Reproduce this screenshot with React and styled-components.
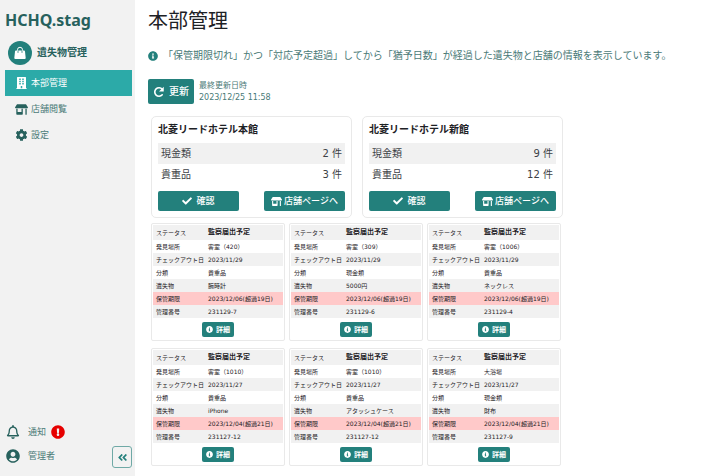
import React from 'react';
import styled, { createGlobalStyle, css, ThemeProvider } from 'styled-components';
import {
  FaAngleDoubleLeft,
  FaBuilding,
  FaCheck,
  FaCog,
  FaExclamationCircle,
  FaInfoCircle,
  FaRegBell,
  FaStoreAlt,
  FaUserCircle,
} from 'react-icons/fa';

const theme = {
  colors: {
    primary: '#23807c',
    primaryDark: '#27615d',
    active: '#2caaa8',
    sidebar: '#f2f2f2',
    stripe: '#f1f1f1',
    border: '#e9e9e9',
    danger: '#ffc9c9',
    alert: '#e60000',
    text: '#1d2125',
    textLight: '#3c4145',
    link: '#4a7a77',
  },
};

const GlobalStyle = createGlobalStyle`
  *, *::before, *::after {
    box-sizing: border-box;
  }

  body {
    margin: 0;
    background: #fff;
    color: ${theme.colors.text};
    font-family: "DejaVu Sans", "Noto Sans CJK JP", sans-serif;
    font-size: 10px;
    line-height: 14px;
  }

  h1, h2, p {
    margin: 0;
  }

  a {
    color: inherit;
    text-decoration: none;
  }

  button {
    font-family: inherit;
    cursor: pointer;
  }

  svg {
    display: block;
    flex-shrink: 0;
  }
`;

const Layout = styled.div`
  display: flex;
  min-height: 100vh;
`;

const Sidebar = styled.aside`
  flex: 0 0 135px;
  display: flex;
  flex-direction: column;
  padding: 8px 3px 8px 5px;
  background: ${({ theme }) => theme.colors.sidebar};
  color: ${({ theme }) => theme.colors.primaryDark};
`;

const Brand = styled.a`
  font-family: "Noto Sans", sans-serif;
  font-size: 16px;
  font-weight: bold;
  line-height: 24px;
`;

const Section = styled.div`
  display: flex;
  align-items: center;
  gap: 5px;
  margin-top: 9px;
  padding-left: 3px;
  font-size: 10px;
  font-weight: bold;
`;

const SectionIcon = styled.span`
  display: flex;
  align-items: center;
  justify-content: center;
  width: 24px;
  height: 24px;
  border-radius: 50%;
  background: ${({ theme }) => theme.colors.primary};
  color: #fff;
`;

const Nav = styled.nav`
  display: flex;
  flex-direction: column;
  margin-top: 5px;
`;

const NavItem = styled.a`
  display: flex;
  align-items: center;
  gap: 3px;
  height: 26px;
  padding-left: 10px;
  font-size: 9px;
  color: ${({ theme }) => theme.colors.link};

  svg {
    width: 13px;
    color: ${({ theme }) => theme.colors.primaryDark};
  }

  ${({ $active, theme }) =>
    $active &&
    css`
      background: ${theme.colors.active};
      color: #fff;

      svg {
        color: #fff;
      }
    `}
`;

const SidebarFooter = styled.div`
  display: flex;
  align-items: flex-end;
  justify-content: space-between;
  margin-top: auto;
`;

const FooterLinks = styled.div`
  display: flex;
  flex-direction: column;
`;

const FooterLink = styled.a`
  display: flex;
  align-items: center;
  gap: 8px;
  height: 24px;
  padding-left: 1px;
  font-size: 9px;
  color: ${({ theme }) => theme.colors.link};

  svg {
    width: 14px;
    color: ${({ theme }) => theme.colors.primaryDark};
  }
`;

const Unread = styled.span`
  display: flex;
  align-items: center;
  gap: 5px;

  svg {
    color: ${({ theme }) => theme.colors.alert};
  }
`;

const CollapseButton = styled.button`
  display: flex;
  align-items: center;
  justify-content: center;
  width: 20px;
  height: 22px;
  padding: 0;
  border: 1px solid #6fa9a6;
  border-radius: 3px;
  background: transparent;
  color: ${({ theme }) => theme.colors.primary};
`;

const Main = styled.main`
  flex: 1;
  min-width: 0;
  padding: 7px 12px 8px 13px;
`;

const PageTitle = styled.h1`
  font-size: 20px;
  font-weight: normal;
  line-height: 28px;
`;

const Notice = styled.p`
  display: flex;
  align-items: center;
  gap: 5px;
  margin-top: 14px;
  color: ${({ theme }) => theme.colors.link};

  svg {
    color: ${({ theme }) => theme.colors.primary};
  }
`;

const UpdateBar = styled.div`
  display: flex;
  align-items: center;
  gap: 5px;
  margin-top: 16px;
`;

const sizes = {
  small: css`
    height: 15px;
    padding: 0 4px;
    font-size: 7px;
    font-weight: bold;
  `,
  medium: css`
    flex: 0 1 81px;
    height: 20px;
    padding: 0 4px;
    font-size: 9px;
    font-weight: 500;
  `,
  large: css`
    height: 25px;
    padding: 0 5px;
    font-size: 10px;
    font-weight: 500;
  `,
};

const Button = styled.button`
  display: inline-flex;
  align-items: center;
  justify-content: center;
  gap: ${({ $gap = 2 }) => $gap}px;
  border: 0;
  border-radius: 2px;
  background: ${({ theme }) => theme.colors.primary};
  color: #fff;
  line-height: 12px;
  white-space: nowrap;
  ${({ $size }) => sizes[$size]}
`;

const Updated = styled.div`
  font-size: 8px;
  line-height: 12px;
  color: ${({ theme }) => theme.colors.link};
`;

const StoreGrid = styled.div`
  display: grid;
  grid-template-columns: repeat(2, minmax(0, 1fr));
  gap: 10px;
  max-width: 415px;
  margin-top: 12px;
  padding-left: 3px;
`;

const StoreCard = styled.section`
  padding: 6px;
  border: 1px solid ${({ theme }) => theme.colors.border};
  border-radius: 5px;
`;

const StoreName = styled.h2`
  font-size: 10px;
  font-weight: bold;
  line-height: 14px;
`;

const CountTable = styled.table`
  width: 100%;
  margin-top: 6px;
  border-collapse: collapse;
  color: ${({ theme }) => theme.colors.textLight};

  tr:nth-child(odd) {
    background: ${({ theme }) => theme.colors.stripe};
  }

  th,
  td {
    height: 21px;
    padding: 0 3px;
    font-weight: normal;
    text-align: left;
  }

  td {
    text-align: right;
  }
`;

const StoreActions = styled.div`
  display: flex;
  justify-content: space-between;
  gap: 8px;
  margin-top: 6px;
`;

const ItemGrid = styled.div`
  display: grid;
  grid-template-columns: repeat(3, minmax(0, 1fr));
  gap: 7px 4px;
  max-width: 413px;
  margin-top: 5px;
  padding-left: 3px;
`;

const ItemCard = styled.article`
  display: flex;
  flex-direction: column;
  align-items: center;
  gap: 4px;
  padding: 1px 1px 3px;
  border: 1px solid ${({ theme }) => theme.colors.border};
  border-radius: 2px;
`;

const ItemTable = styled.table`
  width: 100%;
  border-collapse: collapse;
  font-size: 6px;
  line-height: 9px;
  color: ${({ theme }) => theme.colors.text};

  tr:nth-child(odd) {
    background: ${({ theme }) => theme.colors.stripe};
  }

  th,
  td {
    height: 13px;
    padding: 0 0 0 3px;
    font-weight: normal;
    text-align: left;
    white-space: nowrap;
  }

  th {
    width: 52px;
  }
`;

const StatusRow = styled.tr`
  && th,
  && td {
    height: 15px;
  }

  && td {
    font-size: 7px;
    font-weight: bold;
  }
`;

const DeadlineRow = styled.tr`
  && {
    background: ${({ theme }) => theme.colors.danger};
  }
`;

const BagIcon = () => (
  <svg width="14" height="14" viewBox="0 0 28 28" aria-hidden="true">
    <path
      d="M9 12V7.5a5 5 0 0 1 10 0V12"
      fill="none"
      stroke="currentColor"
      strokeWidth="2"
    />
    <path
      d="M6 9h16a2 2 0 0 1 2 1.8l1.4 13.2a2 2 0 0 1-2 2H4.600a2 2 0 0 1-2-2L4 10.800A2 2 0 0 1 6 9z"
      fill="currentColor"
    />
    <path
      d="M10 13V9.500M18 13V9.500"
      fill="none"
      stroke="#23807c"
      strokeWidth="1.600"
      strokeLinecap="round"
    />
  </svg>
);

const ReloadIcon = () => (
  <svg width="12" height="12" viewBox="0 0 24 24" aria-hidden="true">
    <path
      d="M18.500 17.500a8.500 8.500 0 1 1 0-11"
      fill="none"
      stroke="currentColor"
      strokeWidth="3.200"
      strokeLinecap="round"
    />
    <path d="M21.500 1.500v9.500H12z" fill="currentColor" />
  </svg>
);

const stores = [
  { name: '北菱リードホテル本館', cash: 2, valuables: 3 },
  { name: '北菱リードホテル新館', cash: 9, valuables: 12 },
];

const items = [
  { id: 1, place: '客室（420）', checkout: '2023/11/29', type: '貴重品', name: '腕時計', deadline: '2023/12/06(超過19日)', number: '231129-7' },
  { id: 2, place: '客室（309）', checkout: '2023/11/29', type: '現金類', name: '5000円', deadline: '2023/12/06(超過19日)', number: '231129-6' },
  { id: 3, place: '客室（1006）', checkout: '2023/11/29', type: '貴重品', name: 'ネックレス', deadline: '2023/12/06(超過19日)', number: '231129-4' },
  { id: 4, place: '客室（1010）', checkout: '2023/11/27', type: '貴重品', name: 'iPhone', deadline: '2023/12/04(超過21日)', number: '231127-12' },
  { id: 5, place: '客室（1010）', checkout: '2023/11/27', type: '貴重品', name: 'アタッシュケース', deadline: '2023/12/04(超過21日)', number: '231127-12' },
  { id: 6, place: '大浴場', checkout: '2023/11/27', type: '現金類', name: '財布', deadline: '2023/12/04(超過21日)', number: '231127-9' },
];

const Store = ({ store }) => (
  <StoreCard>
    <StoreName>{store.name}</StoreName>
    <CountTable>
      <tbody>
        <tr>
          <th scope="row">現金類</th>
          <td>{store.cash} 件</td>
        </tr>
        <tr>
          <th scope="row">貴重品</th>
          <td>{store.valuables} 件</td>
        </tr>
      </tbody>
    </CountTable>
    <StoreActions>
      <Button type="button" $size="medium" $gap={4}>
        <FaCheck size={10} />
        確認
      </Button>
      <Button type="button" $size="medium">
        <FaStoreAlt size={11} />
        店舗ページへ
      </Button>
    </StoreActions>
  </StoreCard>
);

const Item = ({ item }) => (
  <ItemCard>
    <ItemTable>
      <tbody>
        <StatusRow>
          <th scope="row">ステータス</th>
          <td>監察届出予定</td>
        </StatusRow>
        <tr>
          <th scope="row">発見場所</th>
          <td>{item.place}</td>
        </tr>
        <tr>
          <th scope="row">チェックアウト日</th>
          <td>{item.checkout}</td>
        </tr>
        <tr>
          <th scope="row">分類</th>
          <td>{item.type}</td>
        </tr>
        <tr>
          <th scope="row">遺失物</th>
          <td>{item.name}</td>
        </tr>
        <DeadlineRow>
          <th scope="row">保管期限</th>
          <td>{item.deadline}</td>
        </DeadlineRow>
        <tr>
          <th scope="row">管理番号</th>
          <td>{item.number}</td>
        </tr>
      </tbody>
    </ItemTable>
    <Button type="button" $size="small" $gap={3}>
      <FaInfoCircle size={7} />
      詳細
    </Button>
  </ItemCard>
);

const App = () => {
  return (
    <ThemeProvider theme={theme}>
      <GlobalStyle />
      <Layout>
        <Sidebar>
          <Brand href="#">HCHQ.stag</Brand>
          <Section>
            <SectionIcon>
              <BagIcon />
            </SectionIcon>
            遺失物管理
          </Section>
          <Nav>
            <NavItem href="#" $active>
              <FaBuilding size={12} />
              本部管理
            </NavItem>
            <NavItem href="#">
              <FaStoreAlt size={13} />
              店舗閲覧
            </NavItem>
            <NavItem href="#">
              <FaCog size={12} />
              設定
            </NavItem>
          </Nav>
          <SidebarFooter>
            <FooterLinks>
              <FooterLink href="#">
                <FaRegBell size={14} />
                <Unread>
                  通知
                  <FaExclamationCircle size={14} />
                </Unread>
              </FooterLink>
              <FooterLink href="#">
                <FaUserCircle size={14} />
                管理者
              </FooterLink>
            </FooterLinks>
            <CollapseButton type="button" aria-label="メニューを閉じる">
              <FaAngleDoubleLeft size={11} />
            </CollapseButton>
          </SidebarFooter>
        </Sidebar>

        <Main>
          <PageTitle>本部管理</PageTitle>
          <Notice>
            <FaInfoCircle size={10} />
            「保管期限切れ」かつ「対応予定超過」してから「猶予日数」が経過した遺失物と店舗の情報を表示しています。
          </Notice>
          <UpdateBar>
            <Button type="button" $size="large" $gap={4}>
              <ReloadIcon />
              更新
            </Button>
            <Updated>
              <p>最終更新日時</p>
              <p>2023/12/25 11:58</p>
            </Updated>
          </UpdateBar>

          <StoreGrid>
            {stores.map((store) => (
              <Store key={store.name} store={store} />
            ))}
          </StoreGrid>

          <ItemGrid>
            {items.map((item) => (
              <Item key={item.id} item={item} />
            ))}
          </ItemGrid>
        </Main>
      </Layout>
    </ThemeProvider>
  );
};

export default App;
